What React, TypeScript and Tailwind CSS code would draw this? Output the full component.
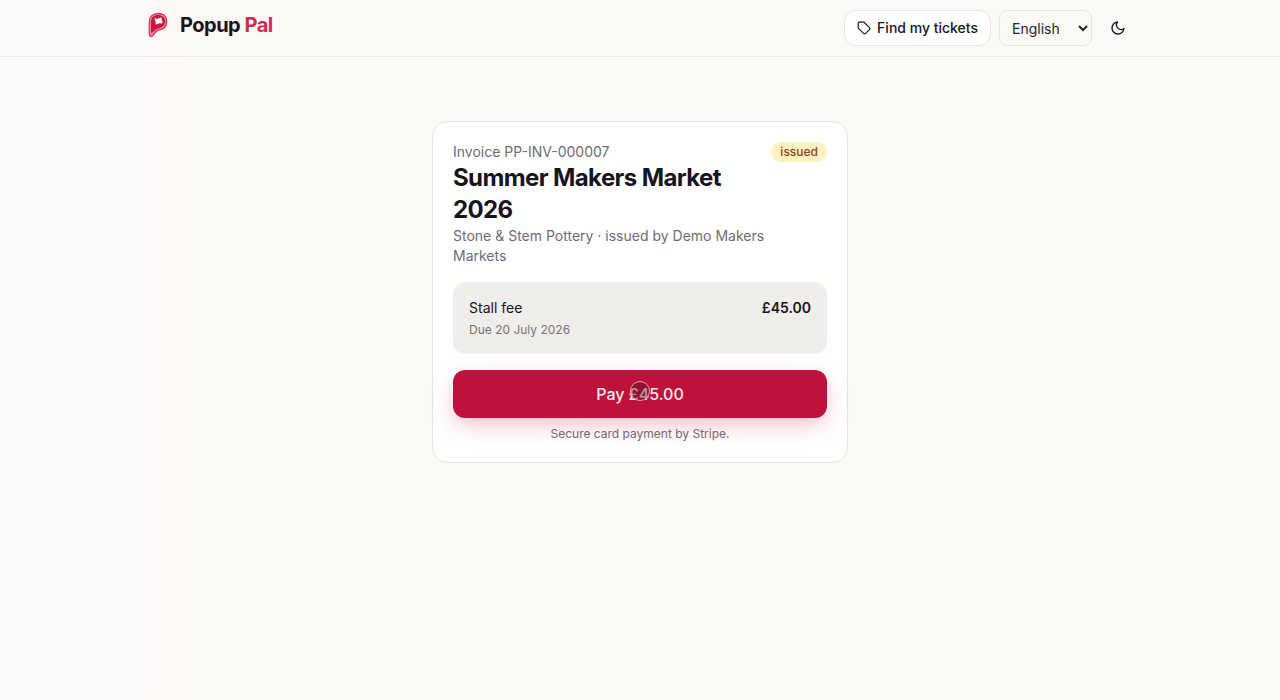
function Logo() {
  return (
    <svg width="20" height="26" viewBox="0 0 20 26" fill="none" aria-hidden="true">
      <path
        d="M1.300 22.500V9.800C1.300 4.700 5 1.300 10.300 1.300c5 0 8.400 3 8.400 7.900 0 4.800-3.200 8-7.900 8.900-1.500.3-2.500 1-3.400 2.300L4.500 23.800c-1.100 1.300-3.200.6-3.200-1.300Z"
        fill="#f08a9d"
        stroke="#dd2a50"
        strokeWidth="1.200"
      />
      <path
        d="M3 21V9.900C3 5.600 5.900 3 10.300 3c4 0 6.700 2.300 6.700 6.200 0 4-2.700 6.400-6.600 7.200-2 .4-3.200 1.300-4.300 2.900L3 21Z"
        fill="#c9183f"
      />
      <path
        d="M6.700 5.800l2.200 1.100 2.400-.9 2.700-.4-.5 2.400 1 1.300-.3 2.500-2.500-.8-1.600 1-2.800.6.5-2.500-1-1.500-.1-2.800Z"
        fill="#fff5f3"
      />
    </svg>
  );
}

function TagIcon() {
  return (
    <svg
      width="14"
      height="14"
      viewBox="0 0 24 24"
      fill="none"
      stroke="currentColor"
      strokeWidth="2"
      strokeLinecap="round"
      strokeLinejoin="round"
      aria-hidden="true"
    >
      <path d="M12.586 2.586A2 2 0 0 0 11.172 2H4a2 2 0 0 0-2 2v7.172a2 2 0 0 0 .586 1.414l8.704 8.704a2.426 2.426 0 0 0 3.420 0l6.580-6.580a2.426 2.426 0 0 0 0-3.420z" />
    </svg>
  );
}

function MoonIcon() {
  return (
    <svg
      width="16"
      height="16"
      viewBox="0 0 24 24"
      fill="none"
      stroke="currentColor"
      strokeWidth="2"
      strokeLinecap="round"
      strokeLinejoin="round"
      aria-hidden="true"
    >
      <path d="M21 12.800A9 9 0 1 1 11.200 3a7 7 0 0 0 9.800 9.800z" />
    </svg>
  );
}

function Header() {
  return (
    <header className="border-b border-[#ebe9e6]">
      <div className="mx-auto flex h-14 max-w-5xl items-center justify-between px-4">
        <a href="#" className="flex items-center gap-3 pb-1.5 pl-1 text-xl font-bold leading-7 tracking-tight text-[#17141f]">
          <Logo />
          <span>
            Popup <span className="text-[#d42a52]">Pal</span>
          </span>
        </a>
        <nav className="flex items-center gap-2">
          <a
            href="#"
            className="flex h-9 items-center gap-1.5 rounded-xl border border-[#e8e6e3] bg-white px-3 text-sm font-medium text-[#17141f]"
          >
            <TagIcon />
            Find my tickets
          </a>
          <select
            aria-label="Language"
            defaultValue="en"
            className="h-9 w-[93px] rounded-lg border border-[#e6e4e1] bg-transparent px-2 text-sm text-[#25222c]"
          >
            <option value="en">English</option>
            <option value="fr">Français</option>
            <option value="es">Español</option>
          </select>
          <button
            type="button"
            aria-label="Switch to dark theme"
            className="flex size-9 items-center justify-center text-[#17141f]"
          >
            <MoonIcon />
          </button>
        </nav>
      </div>
    </header>
  );
}

function Invoice() {
  return (
    <article className="rounded-2xl border border-[#e7e6e2] bg-white p-5">
      <div className="flex items-start justify-between gap-1">
        <div>
          <p className="text-sm text-[#6f6b78]">Invoice PP-INV-000007</p>
          <h1 className="text-2xl font-bold tracking-tight text-[#17141f]">Summer Makers Market 2026</h1>
          <p className="text-sm text-[#6f6b78]">Stone &amp; Stem Pottery · issued by Demo Makers Markets</p>
        </div>
        <span className="rounded-full bg-[#fef1c0] px-[9px] py-0.5 text-xs font-medium text-[#93431a]">issued</span>
      </div>
      <div className="mt-4 rounded-xl bg-[#efeeea] p-4">
        <div className="flex justify-between text-sm text-[#17141f]">
          <span>Stall fee</span>
          <span className="font-semibold">£45.00</span>
        </div>
        <p className="mt-1 text-xs text-[#77737c]">Due 20 July 2026</p>
      </div>
      <button
        type="button"
        className="relative mt-4 flex h-12 w-full items-center justify-center rounded-xl bg-[#bf123b] text-base font-medium text-[#ffe9ee] shadow-[0_8px_24px_-4px_rgba(225,29,72,0.35)]"
      >
        Pay £45.00
        <span className="absolute left-1/2 top-[11px] size-5 -translate-x-1/2 rounded-full border border-[#e3a0a9] bg-[#4a1420]/40" />
      </button>
      <p className="mt-2 text-center text-xs text-[#6f6b78]">Secure card payment by Stripe.</p>
    </article>
  );
}

export default function App() {
  return (
    <div className="min-h-screen bg-[linear-gradient(to_right,#f9f9fa_0,#f9f9fa_140px,#fcf9f6_165px,#faf9f6_200px)] font-['Inter','Liberation_Sans',sans-serif]">
      <Header />
      <main className="mx-auto max-w-md px-4 py-16">
        <Invoice />
      </main>
    </div>
  );
}
